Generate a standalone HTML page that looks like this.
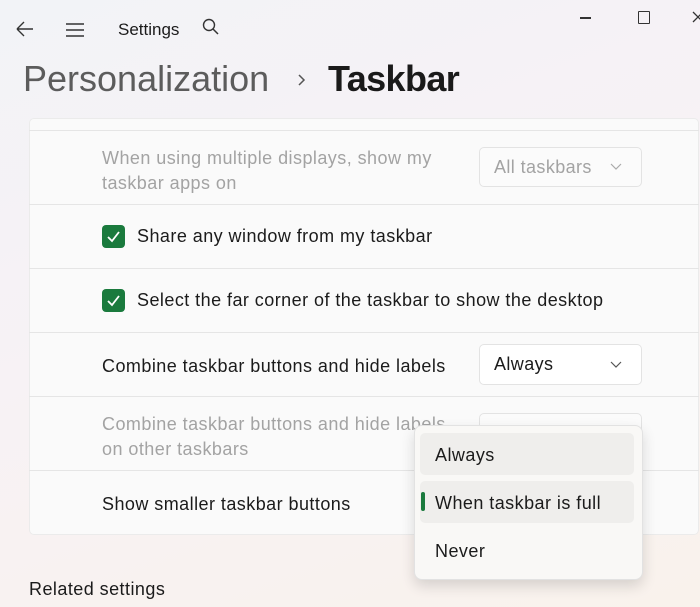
<!DOCTYPE html><html><head><style>
body{margin:0;width:700px;height:607px;overflow:hidden;font-family:"Liberation Sans",sans-serif;background:linear-gradient(160deg,#f2f3f7 0%,#f7f2f5 45%,#f9f2ec 100%);position:relative;color:#1b1b1b}
.a{position:absolute}
.card{left:29px;top:118px;width:668px;height:415px;background:#fbfbfb;border:1px solid #ebebeb;border-radius:5px;opacity:.95}
.sep{left:29px;width:670px;height:1px;background:#e5e5e5}
.t{font-size:18px;white-space:nowrap;letter-spacing:.45px}
.g{color:#a3a3a3}
.cb{width:23px;height:23px;background:#1a7a3d;border-radius:4px}
.dd{border:1px solid #e3e3e3;border-radius:5px;background:#fff;font-size:18px;letter-spacing:.4px}
</style></head><body>
<svg class="a" style="left:15px;top:20px" width="20" height="18"><path d="M2 9H18M2 9L9 2M2 9L9 16" stroke="#333" stroke-width="1.4" fill="none"/></svg>
<svg class="a" style="left:65px;top:22px" width="20" height="16"><path d="M1 2H19M1 8H19M1 14H19" stroke="#333" stroke-width="1.4"/></svg>
<div class="a" style="left:118px;top:20px;font-size:17px">Settings</div>
<svg class="a" style="left:202px;top:18px" width="18" height="18"><circle cx="7" cy="7" r="5.5" stroke="#333" stroke-width="1.4" fill="none"/><path d="M11 11L16 16" stroke="#333" stroke-width="1.5"/></svg>
<div class="a" style="left:580px;top:17px;width:11px;height:1.5px;background:#333"></div>
<div class="a" style="left:638px;top:11px;width:10px;height:11px;border:1.4px solid #333;border-radius:1px"></div>
<svg class="a" style="left:692px;top:11px" width="8" height="12"><path d="M1 1L11 11M11 1L1 11" stroke="#333" stroke-width="1.3"/></svg>
<div class="a" style="left:23px;top:58px;font-size:36px;color:#5c5c5c">Personalization</div>
<svg class="a" style="left:297px;top:73px" width="10" height="14"><path d="M2 2L7 7L2 12" stroke="#555" stroke-width="1.5" fill="none"/></svg>
<div class="a" style="left:328px;top:58px;font-size:36px;color:#1a1a1a;font-weight:bold;letter-spacing:-.6px">Taskbar</div>
<div class="a card"></div>
<div class="a sep" style="top:130px"></div>
<div class="a sep" style="top:204px"></div>
<div class="a sep" style="top:268px"></div>
<div class="a sep" style="top:332px"></div>
<div class="a sep" style="top:396px"></div>
<div class="a sep" style="top:470px"></div>
<div class="a t g" style="left:102px;top:146px;line-height:25px">When using multiple displays, show my<br>taskbar apps on</div>
<div class="a dd g" style="left:479px;top:147px;width:161px;height:38px;background:#fbfbfb"><span class="a" style="left:14px;top:9px">All taskbars</span><svg class="a" style="left:130px;top:15px" width="12" height="8"><path d="M1 1L6 6L11 1" stroke="#aaa" stroke-width="1.2" fill="none"/></svg></div>
<div class="a cb" style="left:102px;top:225px"><svg width="23" height="23"><path d="M6 12L10 16L17 7" stroke="#fff" stroke-width="1.8" fill="none"/></svg></div>
<div class="a t" style="left:137px;top:226px">Share any window from my taskbar</div>
<div class="a cb" style="left:102px;top:289px"><svg width="23" height="23"><path d="M6 12L10 16L17 7" stroke="#fff" stroke-width="1.8" fill="none"/></svg></div>
<div class="a t" style="left:137px;top:290px">Select the far corner of the taskbar to show the desktop</div>
<div class="a t" style="left:102px;top:356px">Combine taskbar buttons and hide labels</div>
<div class="a dd" style="left:479px;top:344px;width:161px;height:39px"><span class="a" style="left:14px;top:9px">Always</span><svg class="a" style="left:130px;top:16px" width="12" height="8"><path d="M1 1L6 6L11 1" stroke="#555" stroke-width="1.2" fill="none"/></svg></div>
<div class="a t g" style="left:102px;top:412px;line-height:25px">Combine taskbar buttons and hide labels<br>on other taskbars</div>
<div class="a dd" style="left:479px;top:413px;width:161px;height:38px;background:#fbfbfb"></div>
<div class="a t" style="left:102px;top:494px">Show smaller taskbar buttons</div>
<div class="a" style="left:414px;top:425px;width:227px;height:153px;background:#f9f8f6;border:1px solid #e2e2e2;border-radius:8px;box-shadow:0 6px 14px rgba(0,0,0,.14)"></div>
<div class="a" style="left:420px;top:433px;width:214px;height:42px;background:#efeeec;border-radius:5px"></div>
<div class="a" style="left:420px;top:481px;width:214px;height:42px;background:#efeeec;border-radius:5px"></div>
<div class="a" style="left:421px;top:492px;width:4px;height:19px;background:#1a7a3d;border-radius:2px"></div>
<div class="a t" style="left:435px;top:445px">Always</div>
<div class="a t" style="left:435px;top:493px">When taskbar is full</div>
<div class="a t" style="left:435px;top:541px">Never</div>
<div class="a t" style="left:29px;top:579px">Related settings</div>
</body></html>
